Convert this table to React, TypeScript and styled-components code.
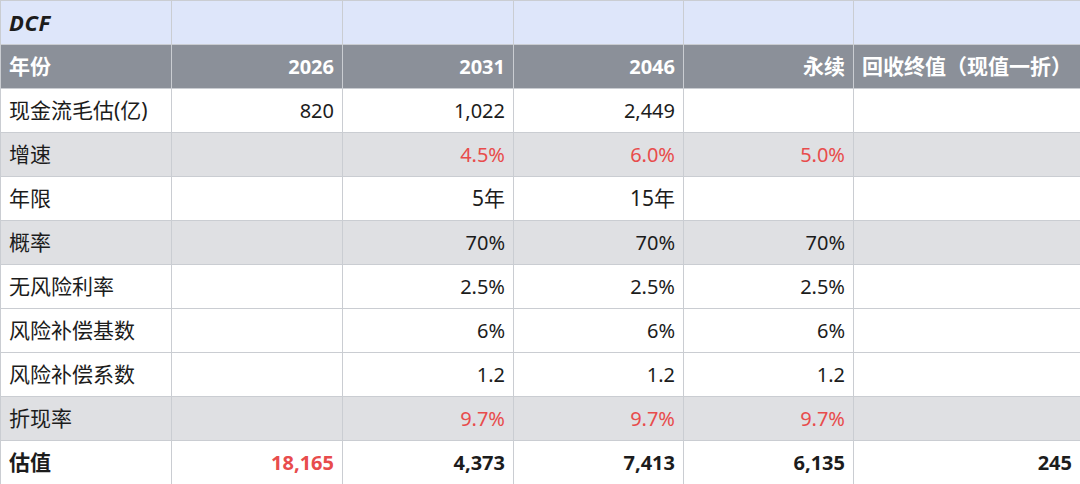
import React from "react";
import styled, { createGlobalStyle } from "styled-components";

const Global = createGlobalStyle`
  html, body { margin: 0; padding: 0; background: #ffffff; }
  body { font-family: "Noto Sans", "Noto Sans CJK SC", sans-serif; }
`;

const Table = styled.table`
  width: 1080px;
  table-layout: fixed;
  border-collapse: collapse;
  font-family: "Noto Sans", "Noto Sans CJK SC", sans-serif;
  font-size: 20px;
  color: #1c1c1c;
`;

type Tone = "title" | "head" | "plain" | "shade" | "total";

const bg: Record<Tone, string> = {
  title: "#dee6fa",
  head: "#8b9099",
  plain: "#ffffff",
  shade: "#dfe0e3",
  total: "#ffffff",
};

const Row = styled.tr<{ $tone: Tone }>`
  height: 44px;
  background: ${(p) => bg[p.$tone]};
  color: ${(p) => (p.$tone === "head" ? "#ffffff" : "#1c1c1c")};
  font-weight: ${(p) => (p.$tone === "head" || p.$tone === "total" ? 700 : 400)};
`;

const Cell = styled.td<{ $left?: boolean; $red?: boolean; $cjk?: boolean }>`
  box-sizing: border-box;
  height: 44px;
  padding: 0 8px 0 8px;
  border: 1px solid #cacdd2;
  text-align: ${(p) => (p.$left ? "left" : "right")};
  color: ${(p) => (p.$red ? "#e84c4c" : "inherit")};
  font-size: ${(p) => (p.$cjk ? "21px" : "20px")};
  white-space: nowrap;
  overflow: visible;
  vertical-align: middle;
  line-height: 1;
`;

const Title = styled.span`
  font-size: 22px;
  font-weight: 700;
  font-style: italic;
  letter-spacing: 0.5px;
`;

type Val = { t: string; red?: boolean };

type RowData = { tone: Tone; label: string; vals: Val[]; title?: boolean };

const v = (t: string, red = false): Val => ({ t, red });

const rows: RowData[] = [
  { tone: "title", label: "DCF", title: true, vals: [v(""), v(""), v(""), v(""), v("")] },
  { tone: "head", label: "年份", vals: [v("2026"), v("2031"), v("2046"), v("永续"), v("回收终值（现值一折）")] },
  { tone: "plain", label: "现金流毛估(亿)", vals: [v("820"), v("1,022"), v("2,449"), v(""), v("")] },
  { tone: "shade", label: "增速", vals: [v(""), v("4.5%", true), v("6.0%", true), v("5.0%", true), v("")] },
  { tone: "plain", label: "年限", vals: [v(""), v("5年"), v("15年"), v(""), v("")] },
  { tone: "shade", label: "概率", vals: [v(""), v("70%"), v("70%"), v("70%"), v("")] },
  { tone: "plain", label: "无风险利率", vals: [v(""), v("2.5%"), v("2.5%"), v("2.5%"), v("")] },
  { tone: "plain", label: "风险补偿基数", vals: [v(""), v("6%"), v("6%"), v("6%"), v("")] },
  { tone: "plain", label: "风险补偿系数", vals: [v(""), v("1.2"), v("1.2"), v("1.2"), v("")] },
  { tone: "shade", label: "折现率", vals: [v(""), v("9.7%", true), v("9.7%", true), v("9.7%", true), v("")] },
  { tone: "total", label: "估值", vals: [v("18,165", true), v("4,373"), v("7,413"), v("6,135"), v("245")] },
];

const widths = [171, 171, 171, 170, 170, 227];
const isCjk = (s: string) => /[\u4e00-\u9fff\uff08\uff09]/.test(s);

export default function App() {
  return (
    <>
      <Global />
      <Table>
        <colgroup>
          {widths.map((w, i) => (
            <col key={i} style={{ width: w }} />
          ))}
        </colgroup>
        <tbody>
          {rows.map((r, i) => (
            <Row key={i} $tone={r.tone}>
              <Cell $left $cjk>
                {r.title ? <Title>{r.label}</Title> : r.label}
              </Cell>
              {r.vals.map((c, j) => (
                <Cell key={j} $red={c.red} $cjk={isCjk(c.t)}>
                  {c.t}
                </Cell>
              ))}
            </Row>
          ))}
        </tbody>
      </Table>
    </>
  );
}
